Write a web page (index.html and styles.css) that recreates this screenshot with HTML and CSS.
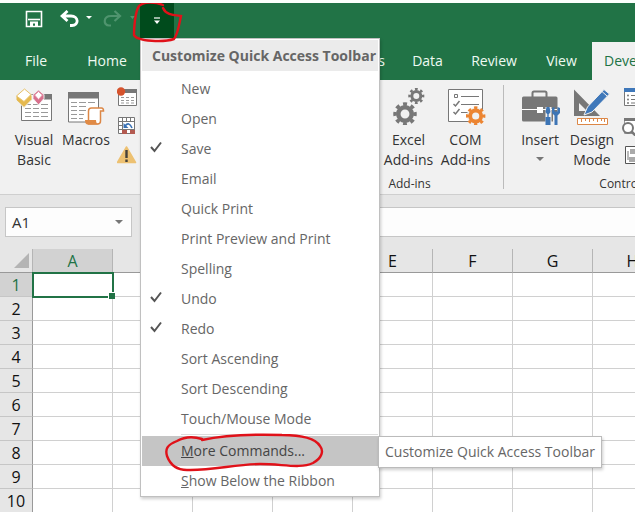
FILE: index.html
```html
<!DOCTYPE html>
<html lang="en">
<head>
<meta charset="utf-8">
<title>Spreadsheet</title>
<link rel="stylesheet" href="styles.css">
</head>
<body>
<header class="titlebar">
  <button class="qat save" aria-label="Save"><svg width="18" height="18" viewBox="0 0 18 18"><path d="M1.500 1.500h15v15h-15z" fill="none" stroke="#fff" stroke-width="1.600"/><path d="M3 9.500h12" stroke="#fff" stroke-width="1.600"/><path d="M5 11.500h8v5h-3v-3h-2v3h-3z" fill="#fff"/></svg></button>
  <button class="qat undo" aria-label="Undo"><svg width="32" height="18" viewBox="0 0 32 18"><path d="M3 6h8c8 0 8 9.500 1 9.500h-2M7.500 1L2 6l5.500 5" fill="none" stroke="#fff" stroke-width="2.800"/><path d="M26 6h6l-3 3z" fill="#fff"/></svg></button>
  <button class="qat redo" aria-label="Redo"><svg width="32" height="18" viewBox="0 0 32 18"><path d="M16 6H8C0 6 0 15.500 6 15.500h2M11.500 1L17 6l-5.500 5" fill="none" stroke="#4f946e" stroke-width="2.200"/><path d="M27 6h5l-2.500 3z" fill="#4f946e"/></svg></button>
  <button class="qat customize" aria-label="Customize Quick Access Toolbar"><svg width="8" height="8" viewBox="0 0 8 8"><path d="M1 1h6" stroke="#fff" stroke-width="1.200"/><path d="M1 3.500h6L4 7z" fill="#fff"/></svg></button>
</header>

<nav class="tabs">
  <a href="#">File</a><a href="#">Home</a><a href="#">Insert</a><a href="#">Page Layout</a><a href="#" class="end">Formulas</a><a href="#">Data</a><a href="#">Review</a><a href="#">View</a><a href="#" class="active">Developer</a>
</nav>

<section class="ribbon">
  <div class="group code">
    <div class="tools">
      <button class="tool"><svg width="40" height="38" viewBox="15 87 40 38"><path d="M22.500 94.500h30v26h-30z" fill="#fff" stroke="#777" /><path d="M45 94h8v5.500h-8z" fill="#777"/><path d="M26 104.500h6m2 0h6m2 0h7M26 108.500h6m2 0h6m2 0h7M26 112.500h6m2 0h6m2 0h7M26 116.500h6m2 0h6m2 0h7" stroke="#999"/><path d="M25 89l8 6.500v4L25 107.500l-8-7.500v-4z" fill="#e5b94f" stroke="#f1f1f1"/><path d="M25.500 89l6.500 5.500-7 7-7.500-5.500z" fill="#fff" stroke="#e8c36c"/><path d="M39.500 90l5.500 4.500v4L39.500 105 34 98.500v-4z" fill="#d9708d" stroke="#f1f1f1"/><path d="M39.500 91.500l4 3.500-4 4.500-4-4.500z" fill="#fff" stroke="#df8ba2"/></svg><span>Visual<br>Basic</span></button>
      <button class="tool"><svg width="40" height="38" viewBox="67 87 40 38"><path d="M69.500 92.500h30v29.500h-30z" fill="#fff" stroke="#777"/><path d="M69 92h31v6.500H69z" fill="#777"/><path d="M72 102.500h6m2 0h7m2 0h7M72 106.500h6m2 0h7M72 110.500h6m2 0h7M72 114.500h6m2 0h5M72 118.500h6m2 0h4" stroke="#999"/><path d="M89.500 121v-10q0-3 3-3h10q2 0 2 3h-3v10q0 3-3 3h-9z" fill="#fff" stroke="#dc8746" stroke-width="1.500"/><path d="M86 120h11q0 4 3 4.500H89q-3 0-3-4.500z" fill="#e08a45"/></svg><span>Macros</span></button>
      <div class="minis">
        <button aria-label="Record Macro"><svg width="20" height="20" viewBox="118 87 20 20"><path d="M119.500 89.500h18v16h-18z" fill="#fff" stroke="#777"/><path d="M126 89h12v4h-12z" fill="#777"/><path d="M122 97.500h3m2 0h3m2 0h3M122 100.500h3m2 0h3m2 0h3M122 103h3m2 0h3m2 0h3" stroke="#999"/><circle cx="122" cy="91.500" r="4.200" fill="#d6532d"/></svg></button>
        <button aria-label="Use Relative References"><svg width="20" height="20" viewBox="118 116 20 20"><path d="M119.500 117.500h16v16h-16zM119.500 121.500h16M119.500 125.500h4M119.500 129.500h16M123.500 117.500v16M127.500 117.500v4M131.500 117.500v4" fill="#fff" stroke="#777"/><path d="M124 122h11v7h-11z" fill="#fff"/><path d="M123 130h5v4h-5zM131 130h5v4h-5z" fill="#b35a50"/><path d="M126 126q4-5 7 2" fill="none" stroke="#3871b5" stroke-width="1.600"/><path d="M124.500 123v5h5z" fill="#3871b5"/></svg></button>
        <button aria-label="Macro Security"><svg width="20" height="20" viewBox="118 145 20 20"><path d="M127.500 147l9 15.500h-18z" fill="#edc172" stroke="#edc172" stroke-width="1.500" stroke-linejoin="round"/><path d="M127.500 150v8m0 1.500v2.500" stroke="#45413a" stroke-width="2.400"/></svg></button>
      </div>
    </div>
    <div class="caption">Code</div>
  </div>
  <div class="group addins">
    <div class="tools">
      <button class="tool wide"><svg width="40" height="38" viewBox="0 0 40 38"><path d="M8 8h24v22H8z" fill="#777"/></svg><span>Add-ins</span></button>
      <button class="tool wide"><svg width="40" height="38" viewBox="388 87 40 38"><g fill="none" stroke="#777"><circle cx="404" cy="114" r="6.700" stroke-width="4.500"/><circle cx="404" cy="114" r="10" stroke-width="3.500" pathLength="16" stroke-dasharray="1 1" transform="rotate(-11 404 114)"/><circle cx="415.300" cy="96" r="4.500" stroke-width="3"/><circle cx="415.300" cy="96" r="6.800" stroke-width="2.500" pathLength="16" stroke-dasharray="1 1" transform="rotate(-11 415.300 96)"/></g></svg><span>Excel<br>Add-ins</span></button>
      <button class="tool wide"><svg width="40" height="38" viewBox="445 87 40 38"><path d="M447.500 89.500h34v32h-34z" fill="#fff" stroke="#777"/><path d="M453.500 94.500h3v3h-3zM460 96.500h18M460 104.500h18M460 112.500h8" fill="none" stroke="#777"/><path d="M452.500 104l2 2 4-5M452.500 112l2 2 4-5" fill="none" stroke="#777" stroke-width="1.500"/><circle cx="474.700" cy="116" r="9" fill="#f1f1f1"/><g fill="none" stroke="#ec8532"><circle cx="474.700" cy="116" r="5.500" stroke-width="3.800"/><circle cx="474.700" cy="116" r="8.200" stroke-width="3" pathLength="16" stroke-dasharray="1 1" transform="rotate(-11 474.700 116)"/></g></svg><span>COM<br>Add-ins</span></button>
    </div>
    <div class="caption">Add-ins</div>
  </div>
  <div class="group controls">
    <div class="tools">
      <button class="tool"><svg width="40" height="38" viewBox="520 87 40 38"><path d="M532.500 97v-4q0-1.500 1.500-1.500h11q1.500 0 1.500 1.500v4" fill="none" stroke="#777" stroke-width="2"/><rect x="522" y="96.500" width="35.500" height="25" rx="1.500" fill="#777"/><path d="M522 109.500h35" stroke="#fff"/><path d="M537 107h6v6h-6z" fill="#fff"/><path d="M548.500 107v18M556 114v12" stroke="#f1f1f1" stroke-width="6"/><path d="M546.500 107h3l1 5-1.500 2h-2l-1.500-2zM547.300 114h1.400v3h-1.400zM545.500 117h5v8q-2.500 2-5 0zM552 108v5l2.500 2.500V125q1.500 2 3 0v-9.500l2.500-2.500v-5l-2.500-1v4.500h-3V107z" fill="#3d75b5"/></svg><span>Insert</span><i class="caret"></i></button>
      <button class="tool"><svg width="40" height="38" viewBox="572 87 40 38"><path d="M574 89.500L600 116h-26zM579 103v8h8z" fill="#777" fill-rule="evenodd"/><path d="M584 115l3.500-8L604 89.500l5.500 4.500L592 112z" fill="#3f78ba" stroke="#f1f1f1"/><path d="M602 91.500l5 4.500" stroke="#f1f1f1"/><path d="M577.500 118.500h30v6h-30z" fill="#fff" stroke="#dc8746"/><path d="M581.500 119v3m4-3v2m4-2v3m4-3v2m4-2v3m4-3v2m3-2v3" stroke="#dc8746"/></svg><span>Design<br>Mode</span></button>
      <div class="minis">
        <button aria-label="Properties"><svg width="20" height="20" viewBox="622 87 20 20"><path d="M624.500 88.500h16v17h-16z" fill="#fff" stroke="#777"/><path d="M624 88h17v4h-17z" fill="#3f78ba"/><path d="M631 95.500h8M631 99.500h8M631 103h8" stroke="#777"/><circle cx="628" cy="95.500" r="1" fill="#777"/><circle cx="628" cy="99.500" r="1" fill="#777"/><circle cx="628" cy="103" r="1" fill="#777"/></svg></button>
        <button aria-label="View Code"><svg width="20" height="20" viewBox="622 116 20 20"><path d="M624.500 118.500h16v15h-16z" fill="#fff" stroke="#999"/><path d="M624 118h17v3h-17z" fill="#777"/><circle cx="628" cy="128" r="5" fill="#fff" stroke="#777" stroke-width="2"/><path d="M631.500 131.500l4 4" stroke="#777" stroke-width="2.500"/></svg></button>
        <button aria-label="Run Dialog"><svg width="20" height="20" viewBox="622 145 20 20"><path d="M625.500 146.500h15v17h-15z" fill="#fff" stroke="#555"/><path d="M630 149h9v5h-9zM629 157h10v5h-10z" fill="#aaa"/><path d="M628 151v9" stroke="#777"/></svg></button>
      </div>
    </div>
    <div class="caption">Controls</div>
  </div>
</section>

<section class="formula">
  <button class="namebox"><span>A1</span><i class="caret"></i></button>
  <input class="fx" aria-label="Formula bar">
</section>

<main class="sheet">
  <table>
    <colgroup><col class="rowcol"><col span="8" class="datacol"></colgroup>
    <thead><tr><th class="corner"><svg width="15" height="15" viewBox="0 0 15 15"><path d="M15 0v15H0z" fill="#b4b4b4"/></svg></th><th class="on">A</th><th>B</th><th>C</th><th>D</th><th>E</th><th>F</th><th>G</th><th>H</th></tr></thead>
    <tbody>
      <tr><th class="on">1</th><td class="cell"></td><td></td><td></td><td></td><td></td><td></td><td></td><td></td></tr>
      <tr><th>2</th><td></td><td></td><td></td><td></td><td></td><td></td><td></td><td></td></tr>
      <tr><th>3</th><td></td><td></td><td></td><td></td><td></td><td></td><td></td><td></td></tr>
      <tr><th>4</th><td></td><td></td><td></td><td></td><td></td><td></td><td></td><td></td></tr>
      <tr><th>5</th><td></td><td></td><td></td><td></td><td></td><td></td><td></td><td></td></tr>
      <tr><th>6</th><td></td><td></td><td></td><td></td><td></td><td></td><td></td><td></td></tr>
      <tr><th>7</th><td></td><td></td><td></td><td></td><td></td><td></td><td></td><td></td></tr>
      <tr><th>8</th><td></td><td></td><td></td><td></td><td></td><td></td><td></td><td></td></tr>
      <tr><th>9</th><td></td><td></td><td></td><td></td><td></td><td></td><td></td><td></td></tr>
      <tr><th>10</th><td></td><td></td><td></td><td></td><td></td><td></td><td></td><td></td></tr>
    </tbody>
  </table>
</main>

<div class="menu">
  <h2>Customize Quick Access Toolbar</h2>
  <button>New</button>
  <button>Open</button>
  <button><svg class="check" viewBox="0 0 12 12"><path d="M1 6l3.500 4L11 1.500" /></svg>Save</button>
  <button>Email</button>
  <button>Quick Print</button>
  <button>Print Preview and Print</button>
  <button>Spelling</button>
  <button><svg class="check" viewBox="0 0 12 12"><path d="M1 6l3.500 4L11 1.500" /></svg>Undo</button>
  <button><svg class="check" viewBox="0 0 12 12"><path d="M1 6l3.500 4L11 1.500" /></svg>Redo</button>
  <button>Sort Ascending</button>
  <button>Sort Descending</button>
  <button>Touch/Mouse Mode</button>
  <hr>
  <button class="hover"><u>M</u>ore Commands...</button>
  <button><u>S</u>how Below the Ribbon</button>
</div>
<div class="tooltip" role="tooltip">Customize Quick Access Toolbar</div>

<svg class="ink" width="340" height="480" viewBox="0 0 340 480" aria-hidden="true">
  <path d="M163 5C153 1 143 2 139 6C135 12 134 28 134 35C137 42 165 42 174 39C178 34 179 25 181 16C174 15 166 15 163 8"/>
  <path d="M202 439C192 436 184 437 177 441C167 445 165 449 167 456C170 464 176 470 187 470C210 471 237 464 260 464C283 464 300 469 313 463C322 458 324 451 320 446C315 438 303 435 282 435C250 434 225 435 202 440"/>
</svg>
</body>
</html>
```
FILE: styles.css
```css
* { box-sizing: border-box; }
html { height: 100%; }
body {
  margin: 0;
  height: 100vh;
  position: relative;
  overflow: hidden;
  border-top: 3px solid #fbfffc;
  background: #e6e6e6;
  color: #333;
  font: 14px/20px "Open Sans", "Noto Sans", sans-serif;
}
button {
  margin: 0;
  padding: 0;
  border: 0;
  background: none;
  color: inherit;
  font: inherit;
}
svg { display: block; flex: none; }

.titlebar {
  display: flex;
  height: 35px;
  padding-left: 25px;
  background: #217346;
}
.qat { display: flex; align-items: center; padding-bottom: 3px; }
.save { width: 35px; }
.undo { width: 43px; }
.redo { width: 37px; }
.customize { width: 34px; justify-content: center; background: #004b1c; padding: 0; }

.tabs {
  display: grid;
  grid-template-columns: 72px 70px 56px 96px 104px 59px 74px 61px 1fr;
  padding-top: 4px;
  background: #217346;
}
.tabs a {
  height: 38px;
  line-height: 38px;
  text-align: center;
  text-decoration: none;
  white-space: nowrap;
  overflow: hidden;
  color: #eefaf2;
}
.tabs .end { text-align: right; padding-right: 13px; }
.tabs .active { background: #f1f1f1; color: #217346; text-align: left; padding-left: 12px; }

.ribbon {
  display: grid;
  grid-template-columns: 315px 189px 236px;
  overflow: hidden;
  background: #f1f1f1;
  border-bottom: 1px solid #cfcfcf;
}
.group { padding: 7px 8px 0; position: relative; }
.controls { padding-left: 10px; }
.addins::after {
  content: "";
  position: absolute;
  right: 0;
  top: 5px;
  bottom: 5px;
  border-right: 1px solid #bbb;
}
.tools { display: flex; height: 87px; }
.tool {
  width: 52px;
  height: 83px;
  display: flex;
  flex-direction: column;
  align-items: center;
  white-space: nowrap;
}
.tool span { margin-top: 5px; }
.wide { width: 57px; }
.minis { display: flex; flex-direction: column; gap: 9px; margin-left: 5px; }
.controls .minis { margin-left: 4px; }
.caption { text-align: center; font-size: 12px; }
.caret {
  border: 4px solid transparent;
  border-top-color: #777;
  border-bottom: 0;
}
.tool .caret { margin-top: 7px; }

.formula { display: flex; padding: 12px 0 12px 5px; gap: 10px; }
.namebox {
  width: 127px;
  height: 30px;
  padding: 0 8px 0 6px;
  display: flex;
  align-items: center;
  justify-content: space-between;
  border: 1px solid #c6c6c6;
  background: #fdfdfd;
  font-size: 15px;
}
.fx {
  flex: 1;
  height: 30px;
  min-width: 0;
  border: solid #c6c6c6;
  border-width: 1px 0;
  background: #fdfdfd;
}

.sheet { overflow: hidden; }
table { width: 673px; table-layout: fixed; border-collapse: separate; border-spacing: 0; }
.rowcol { width: 33px; }
.datacol { width: 80px; }
th, td { height: 24px; padding: 0; }
th { font-weight: 400; font-size: 16px; line-height: 20px; color: #111; background: #e6e6e6; }
td { background: #fff; border: solid #d0d0d0; border-width: 0 1px 1px 0; }
tbody th { border: solid #c6c6c6; border-width: 0 1px 1px 0; border-right-color: #999; }
thead th { border-bottom: 1px solid #999; border-right: 1px solid #b5b5b5; }
th.on { background: #d2d2d2; color: #217346; }
.corner svg { margin: 0 3px 0 auto; }
.cell { outline: 2px solid #217346; outline-offset: -1px; position: relative; }
.cell::after {
  content: "";
  position: absolute;
  right: -3px;
  bottom: -3px;
  width: 6px;
  height: 6px;
  background: #217346;
  border: solid #fff;
  border-width: 1px 0 0 1px;
}

.menu {
  position: absolute;
  left: 140px;
  top: 35px;
  width: 240px;
  padding: 1px 1px 0;
  border: 1px solid #c0c0c0;
  background: #fff;
  box-shadow: 1px 2px 3px #0003;
  color: #666;
}
.menu h2 {
  margin: 0 0 3px;
  padding-left: 10px;
  background: #ebebeb;
  font-size: 14px;
  line-height: 31px;
  white-space: nowrap;
}
.menu button {
  display: block;
  position: relative;
  width: 100%;
  height: 30px;
  padding-left: 39px;
  text-align: left;
}
.menu hr { margin: 0 0 1px 39px; border: 0; border-top: 1px solid #ddd; }
.menu .hover { background: #c5c5c5; color: #444; }
.check {
  position: absolute;
  left: 8px;
  top: 7px;
  width: 12px;
  height: 12px;
  fill: none;
  stroke: #555;
  stroke-width: 2;
}
.tooltip {
  position: absolute;
  left: 378px;
  top: 433px;
  padding: 5px 6px;
  border: 1px solid #bbb;
  background: #fff;
  box-shadow: 1px 2px 3px #0003;
  color: #666;
  white-space: nowrap;
}
.ink {
  position: absolute;
  left: 0;
  top: -3px;
  fill: none;
  stroke: #e01119;
  stroke-width: 2.4px;
  stroke-linecap: round;
  pointer-events: none;
}
```
